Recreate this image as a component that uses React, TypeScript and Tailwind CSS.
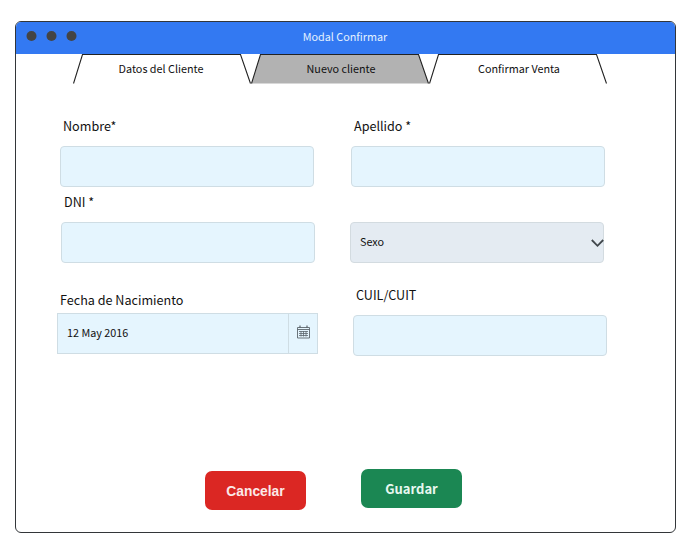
import type { ReactNode } from "react";

function Tab({ label, active = false, nudge }: { label: string; active?: boolean; nudge: string }) {
  return (
    <div className="relative h-[30px] w-[178px]">
      <svg className="absolute inset-0" width="178" height="30" viewBox="0 0 178 30" fill="none">
        <path d="M0.5 29.5 L9.5 0.5 H167.5 L177.5 29.5 Z" fill={active ? "#b2b2b2" : "#ffffff"} />
        <path d="M0.5 29.5 L9.5 0.5 H167.5 L177.5 29.5" stroke="#222222" strokeWidth="1.1" />
      </svg>
      <span className={"relative flex h-[28px] items-center justify-center text-[10.8px] text-[#111111] " + nudge}>
        {label}
      </span>
    </div>
  );
}

function Label({ className, children }: { className: string; children: ReactNode }) {
  return (
    <label className={"block h-5 text-[12.6px] leading-5 whitespace-nowrap text-[#111111] " + className}>
      {children}
    </label>
  );
}

function Field({ className }: { className: string }) {
  return <div className={"h-[41px] w-[254px] rounded-[4px] border border-[#cfdde4] bg-[#e5f5fe] " + className} />;
}

function WindowDots() {
  return (
    <svg width="52" height="10" viewBox="0 0 52 10" fill="#444444">
      <circle cx="5.5" cy="5" r="5" />
      <circle cx="25.5" cy="5" r="5" />
      <circle cx="45.5" cy="5" r="5" />
    </svg>
  );
}

function CalendarIcon() {
  return (
    <svg width="13" height="14" viewBox="0 0 13 14" fill="none" stroke="#5c666d">
      <path d="M0.5 2.5H12.5V13H0.5Z M0.5 4.5H12.5" strokeWidth="0.9" />
      <path d="M3 0.5V3 M10 0.5V3" strokeWidth="1.2" />
      <path d="M2 6.5H11 M2 8.5H11 M2 10.5H11 M4 6V11.5 M6.5 6V11.5 M9 6V11.5" strokeWidth="0.8" />
    </svg>
  );
}

export default function App() {
  return (
    <div
      className="h-[543px] w-[688px] overflow-hidden bg-white pt-[21px] pl-[15px]"
      style={{ fontFamily: '"Noto Sans CJK SC", "Noto Sans", sans-serif' }}
    >
      <div className="flex h-[512px] w-[661px] flex-col overflow-hidden rounded-[6px] border border-[#333639] bg-white">
        <header className="flex h-8 shrink-0 items-center bg-[#3379f2]">
          <div className="w-[120px] pb-[4px] pl-[10px]">
            <WindowDots />
          </div>
          <h1 className="flex-1 pr-px pb-[4px] text-center text-[10.8px] text-[#e4f1ff]">Modal Confirmar</h1>
          <div className="w-[120px]" />
        </header>

        <nav className="flex h-[30px] shrink-0 pl-[57px]">
          <Tab label="Datos del Cliente" nudge="pr-[2px]" />
          <Tab label="Nuevo cliente" active nudge="pl-[2px]" />
          <Tab label="Confirmar Venta" nudge="pl-[2px]" />
        </nav>

        <main className="flex h-[385px] shrink-0 pt-8">
          <section className="w-[334px] pl-[41px]">
            <Label className="ml-[6px]">Nombre*</Label>
            <Field className="mt-[10px] ml-[3px]" />
            <Label className="mt-[5px] ml-[7px]">DNI *</Label>
            <Field className="mt-[10px] ml-1" />
            <Label className="mt-[27px] ml-[3px]">Fecha de Nacimiento</Label>
            <div className="mt-[3px] flex h-[41px] w-[261px] border border-[#cfdde4] bg-[#e5f5fe]">
              <span className="flex flex-1 items-center pb-[2px] pl-[9px] text-[10.8px] text-[#111111]">
                12 May 2016
              </span>
              <span className="flex w-[29px] items-center justify-center border-l border-[#cfdde4] pb-[3px]">
                <CalendarIcon />
              </span>
            </div>
          </section>

          <section className="flex-1">
            <Label className="ml-1">Apellido *</Label>
            <Field className="mt-[10px] ml-px" />
            <div className="mt-[35px] flex h-[41px] w-[254px] items-center justify-between rounded-[4px] border border-[#d3dbe0] bg-[#e4ebf2] pl-[9px] text-[10.8px] text-[#111111]">
              <span className="pb-[2px]">Sexo</span>
              <svg className="mt-[2px] -mr-px" width="13" height="9" viewBox="0 0 13 9" fill="none" stroke="#41474c" strokeWidth="1.8">
                <path d="M0.8 1 L6.5 6.8 L12.2 1" />
              </svg>
            </div>
            <Label className="mt-[22px] ml-[6px]">CUIL/CUIT</Label>
            <Field className="mt-[10px] ml-[3px]" />
          </section>
        </main>

        <footer className="flex items-start gap-[55px] pl-[189px]">
          <button className="mt-[2px] h-[39px] w-[101px] rounded-[7px] bg-[#db2723] pt-[3px] font-['Liberation_Sans'] text-[13.8px] font-bold text-[#fbe9e8]">
            Cancelar
          </button>
          <button className="h-[39px] w-[101px] rounded-[7px] bg-[#1b8753] text-[13px] font-bold text-[#e8f8f0]">
            Guardar
          </button>
        </footer>
      </div>
    </div>
  );
}
